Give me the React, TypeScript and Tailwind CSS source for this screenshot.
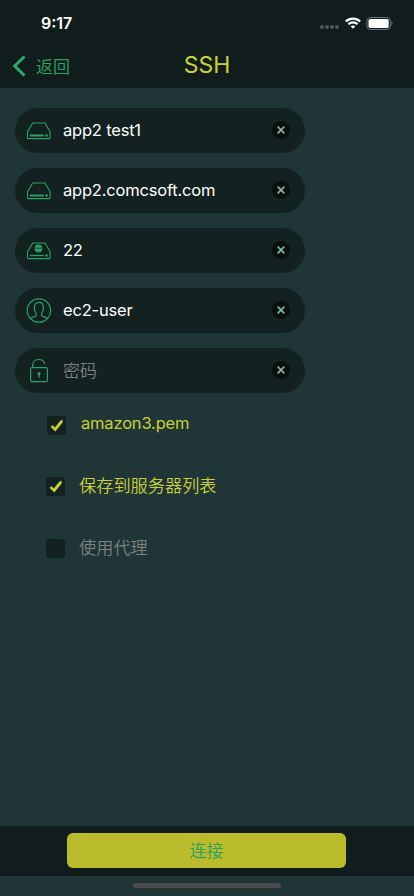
import { useState } from 'react';
import type { ReactNode } from 'react';
import clsx from 'clsx';

const latin = "font-['Inter','Noto_Sans_CJK_SC',sans-serif]";
const cjk = "font-['Noto_Sans_CJK_SC',sans-serif] font-[350]";

function DriveIcon({ port = false }: { port?: boolean }) {
  return (
    <svg width="24" height="18" viewBox="0 0 24 18" fill="none" stroke="#2ba166" strokeWidth="1.1">
      <path d="M5.700 1h12.200l5.200 8.800v6a.8.8 0 0 1-.8.8H1.300a.8.8 0 0 1-.8-.8v-6z" />
      <path d="M2.800 13.500h14" strokeWidth={port ? 1.3 : 2} />
      <circle cx="19.500" cy="13.500" r="1.300" fill="#2ba166" stroke="none" />
      {port && (
        <>
          <circle cx="11.500" cy="6.400" r="3.900" fill="#2ba166" stroke="none" />
          <path d="M7.500 6.200h8" stroke="#17402f" strokeWidth=".9" />
        </>
      )}
    </svg>
  );
}

function UserIcon() {
  return (
    <svg width="26" height="26" viewBox="0 0 26 26" fill="none" stroke="#2ba166" strokeWidth="1.200">
      <circle cx="12.900" cy="12.500" r="11.700" />
      <path d="M4.400 20.400c1.300-1.200 3.900-1.300 5.300-2.400.8-.7.6-2.200.3-2.900-1.300-1.200-1.600-3-1.600-5.600C8.400 6.100 10.200 4.300 12.900 4.300s4.500 1.800 4.500 5.200c0 2.600-.3 4.400-1.600 5.600-.3.700-.5 2.200.3 2.900 1.400 1.100 4 1.200 5.300 2.400" />
    </svg>
  );
}

function LockIcon() {
  return (
    <svg width="20" height="26" viewBox="0 0 20 26" fill="none" stroke="#2ba166" strokeWidth="1.200">
      <rect x="1.600" y="9.700" width="16.800" height="14" rx="1.500" />
      <path d="M3.700 9.700V7.300C3.700 3.800 6.300 1.500 9.700 1.500c3.200 0 5.500 1.600 6.200 4.300" />
      <circle cx="10" cy="15.700" r="1.600" fill="#2ba166" stroke="none" />
      <path d="M10 15.700v4" strokeWidth="1.300" />
    </svg>
  );
}

interface FieldProps {
  icon: ReactNode;
  value: string;
  placeholder?: boolean;
}

function Field({ icon, value, placeholder = false }: FieldProps) {
  return (
    <div className="flex h-[45px] w-[290px] items-center rounded-full bg-[#132120] pr-[15px] pb-px pl-[11px]">
      <span className="flex w-[26px] justify-center pt-[2px]">{icon}</span>
      <span
        className={clsx(
          'ml-[11px] flex-1 whitespace-nowrap leading-6',
          placeholder ? `${cjk} text-[17px] text-[#7d8282]` : `${latin} text-[16.500px] text-white tracking-[-0.2px]`,
        )}
      >
        {value}
      </span>
      <button className="flex size-[18px] items-center justify-center rounded-full bg-[#080f0e]">
        <svg width="8" height="8" viewBox="0 0 8 8" stroke="#86b5a0" strokeWidth="1.700">
          <path d="M.7.7l6.600 6.600M7.300.7L.7 7.300" />
        </svg>
      </button>
    </div>
  );
}

interface CheckProps {
  checked: boolean;
  onToggle: () => void;
}

function CheckBox({ checked, onToggle }: CheckProps) {
  return (
    <button onClick={onToggle} className="flex size-[19px] items-center justify-center rounded-[3px] bg-[#132120]">
      {checked && (
        <svg width="13" height="13" viewBox="0 0 13 13" fill="#cbd038">
          <path d="M.5 7.800l2-1.500 2.400 2.300L10.300 1.800 12.600.6v2.800L5.300 12.600z" />
        </svg>
      )}
    </button>
  );
}

export default function App() {
  const [usePem, setUsePem] = useState(true);
  const [save, setSave] = useState(true);
  const [proxy, setProxy] = useState(false);

  return (
    <div className="flex h-[896px] w-[414px] flex-col overflow-hidden bg-[#203535]">
      {/* Header */}
      <header className="h-[88px] bg-[#111d1c]">
        <div className="flex h-11 items-center justify-between pt-[2px] pr-[21px] pl-[41px]">
          <span className={`${latin} text-[16px] font-semibold text-white`}>9:17</span>
          <div className="flex items-center">
            <div className="mt-2 mr-[6px] flex gap-[1px]">
              {[0, 1, 2, 3].map((i) => (
                <span key={i} className="size-1 rounded-full bg-[#515958]" />
              ))}
            </div>
            <svg width="16" height="12" viewBox="0 0 16 12" fill="none" stroke="#fff" strokeWidth="2.100">
              <path d="M.8 4.500C4.800.6 11.200.6 15.200 4.500" />
              <path d="M3.400 7.200c2.600-2.500 6.600-2.500 9.200 0" />
              <path d="M8 11.700L5.600 9.300c1.300-1.200 3.500-1.200 4.800 0z" fill="#fff" stroke="none" />
            </svg>
            <svg className="ml-[5px]" width="27" height="13" viewBox="0 0 27 13">
              <rect x=".9" y=".5" width="23.400" height="12" rx="3.500" fill="none" stroke="#6c7473" />
              <rect x="2.500" y="2" width="20.200" height="9" rx="1.800" fill="#fff" />
              <path d="M25.400 4.500c1.500.6 1.500 3.400 0 4z" fill="#6c7473" />
            </svg>
          </div>
        </div>
        <div className="grid h-11 grid-cols-[1fr_auto_1fr] items-center">
          <button className="flex items-center pl-3">
            <svg width="14" height="22" viewBox="0 0 14 22" fill="none" stroke="#2cab6c" strokeWidth="3">
              <path d="M12.500 1.500L2.700 11l9.800 9.500" />
            </svg>
            <span className={`${cjk} ml-[10px] text-[17px] leading-6 text-[#2ba166]`}>返回</span>
          </button>
          <h1 className={`${latin} pb-[3px] text-[23px] leading-7 text-[#cbd038]`}>SSH</h1>
        </div>
      </header>

      {/* Connection form */}
      <main className="flex-1 pt-5 pl-[15px]">
        <div className="flex flex-col gap-[15px]">
          <Field icon={<DriveIcon />} value="app2 test1" />
          <Field icon={<DriveIcon />} value="app2.comcsoft.com" />
          <Field icon={<DriveIcon port />} value="22" />
          <Field icon={<UserIcon />} value="ec2-user" />
          <Field icon={<LockIcon />} value="密码" placeholder />
        </div>

        <div className="mt-[23px] ml-8 flex items-center">
          <CheckBox checked={usePem} onToggle={() => setUsePem(!usePem)} />
          <span className={`${latin} -mt-1 ml-[15px] text-[16.500px] leading-[19px] tracking-[-0.18px] text-[#cbd038]`}>
            amazon3.pem
          </span>
        </div>
        <div className="mt-[42px] ml-[31px] flex items-center">
          <CheckBox checked={save} onToggle={() => setSave(!save)} />
          <span className={`${cjk} -mt-[4px] ml-[14px] text-[17.200px] leading-[19px] text-[#cbd038]`}>
            保存到服务器列表
          </span>
        </div>
        <div className="mt-[43px] ml-[31px] flex items-center">
          <CheckBox checked={proxy} onToggle={() => setProxy(!proxy)} />
          <span className={`${cjk} -mt-[4px] ml-[14px] text-[17.200px] leading-[19px] text-[#7d8282]`}>使用代理</span>
        </div>
      </main>

      {/* Bottom bar */}
      <footer>
        <div className="flex h-[50px] justify-center bg-[#111d1c] pt-[7px] pr-px">
          <button className={`${cjk} h-[35px] w-[279px] rounded-md bg-[#babc2c] pb-px text-[17px] text-[#2ba166]`}>
            连接
          </button>
        </div>
        <div className="flex h-5 justify-center pt-[7px]">
          <div className="h-[5px] w-[148px] rounded-full bg-[#4c4a4b]" />
        </div>
      </footer>
    </div>
  );
}
